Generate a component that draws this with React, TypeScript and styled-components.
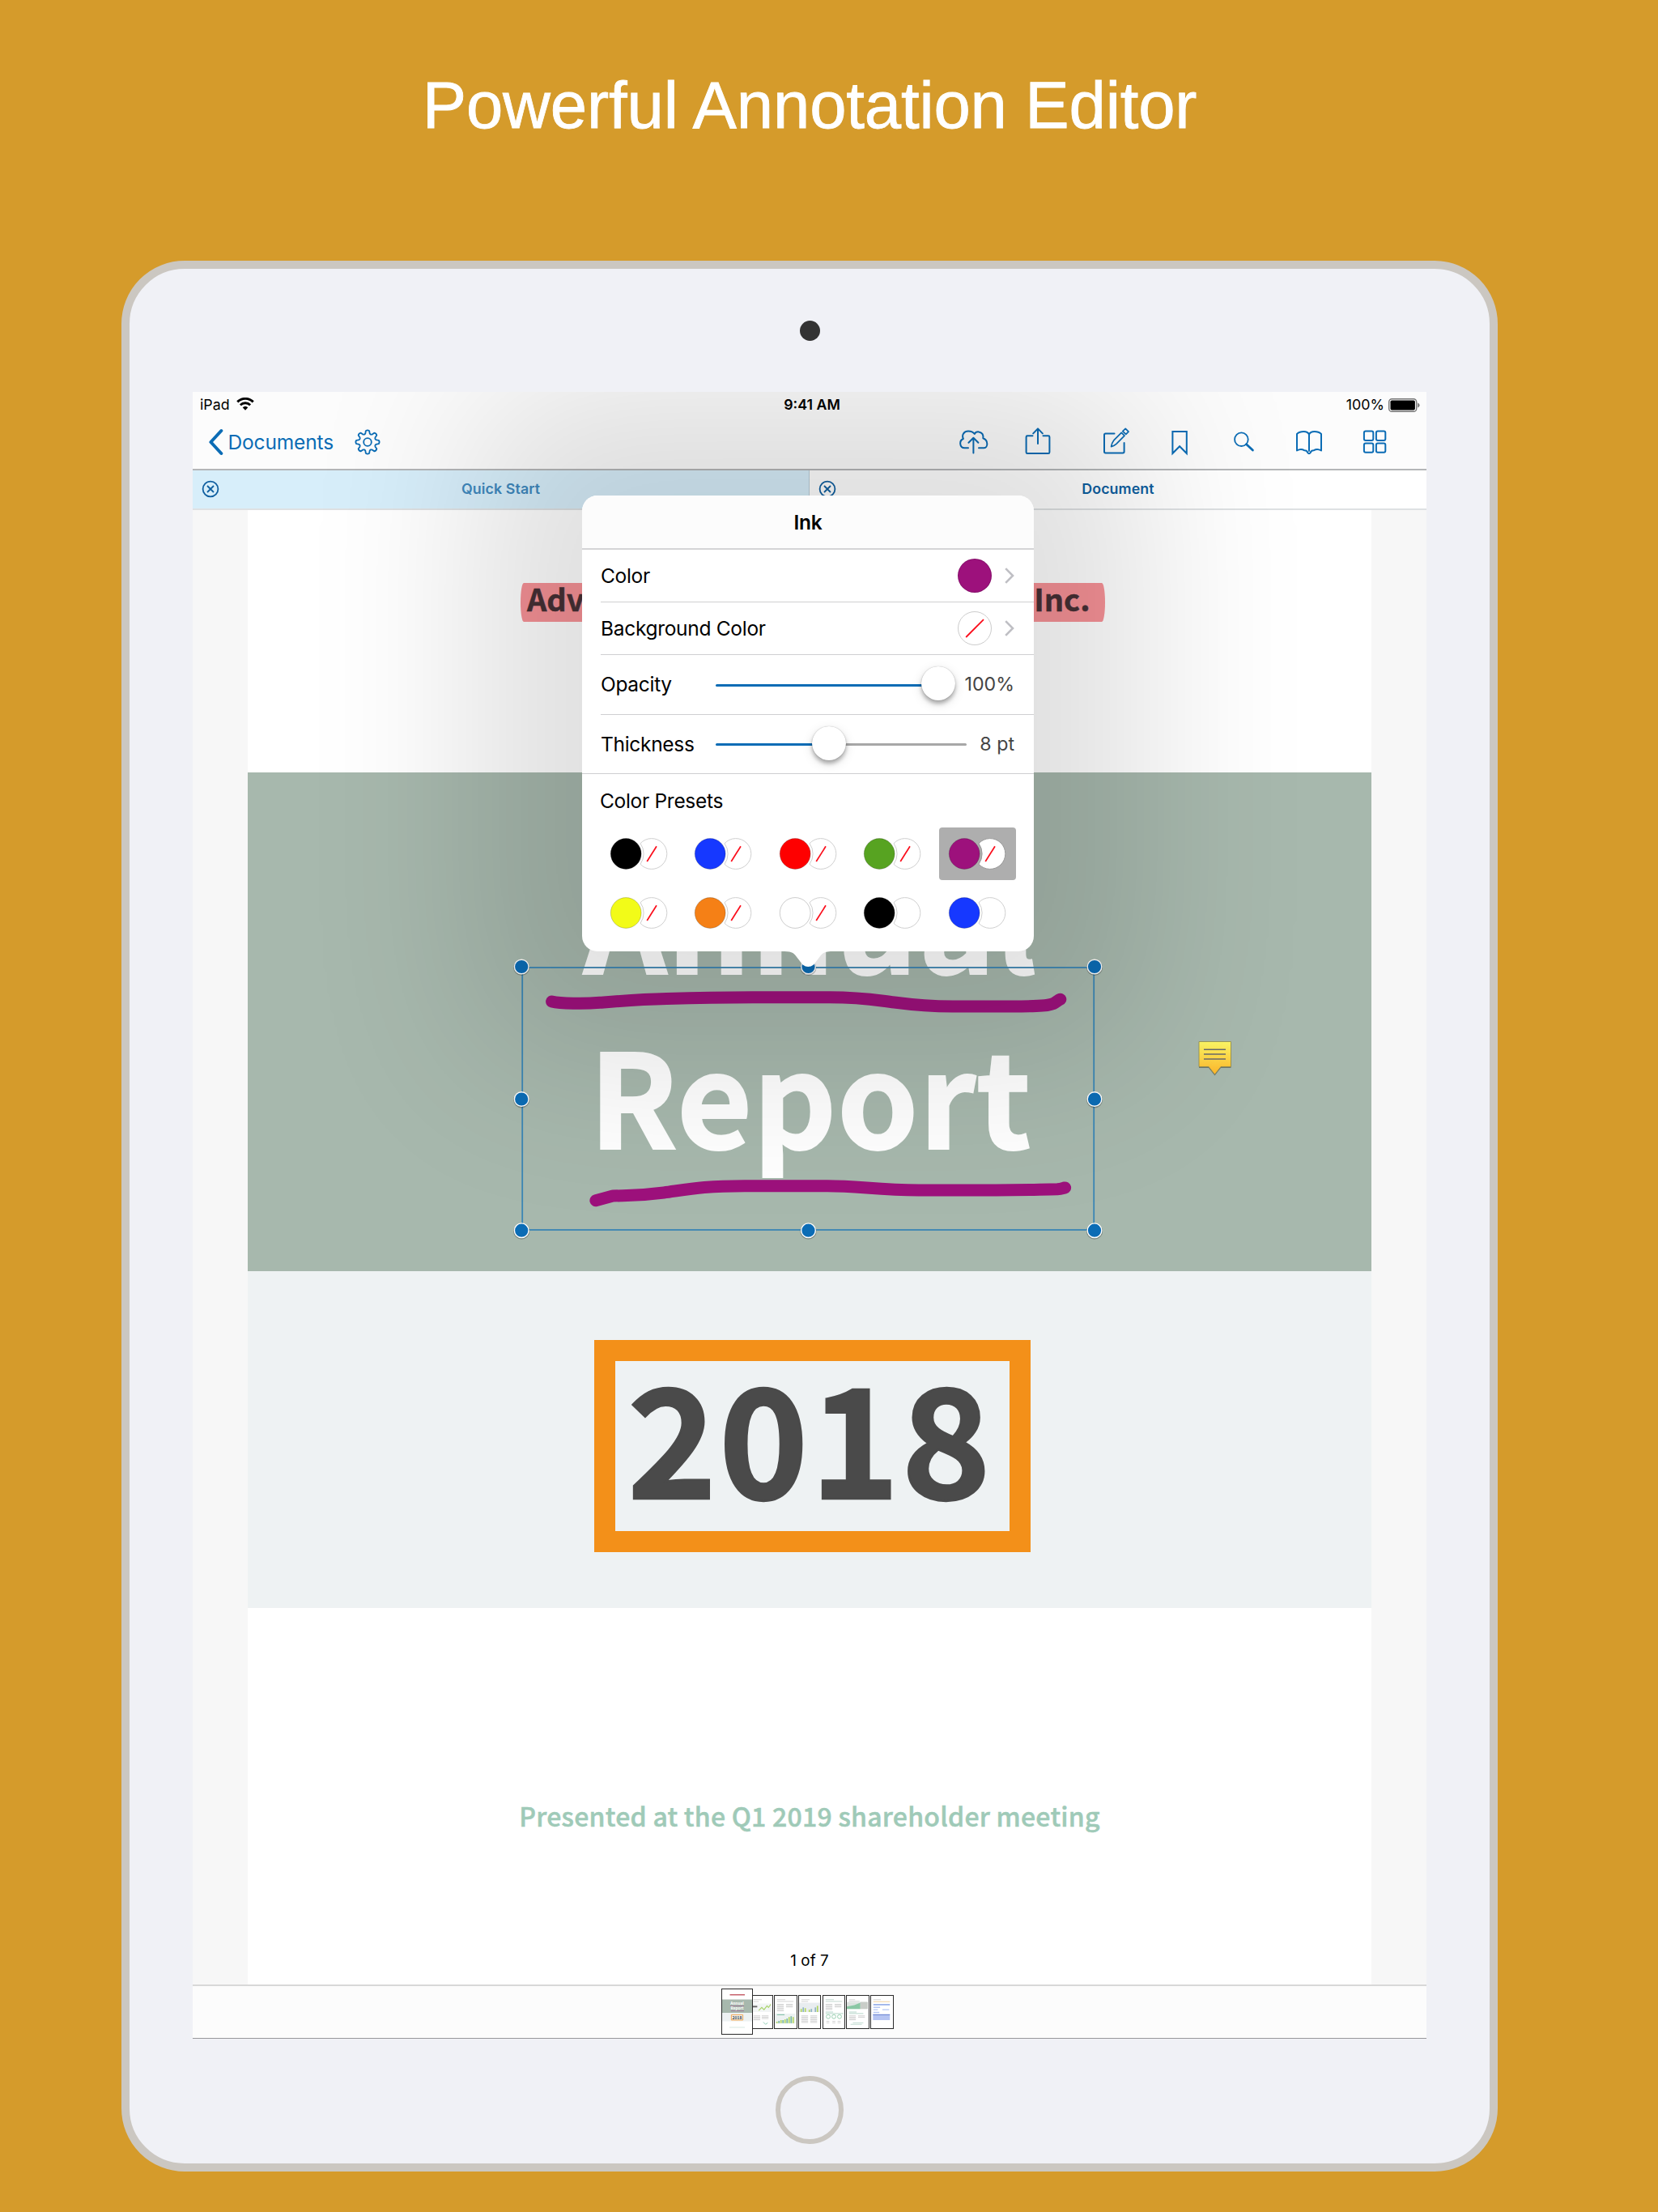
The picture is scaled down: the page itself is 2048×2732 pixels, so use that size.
import React from "react";
import styled, { createGlobalStyle, css } from "styled-components";

const ui = `Inter, "Liberation Sans", sans-serif`;
const doc = `"Noto Sans CJK JP", "Noto Sans", sans-serif`;
const blue = "#0b6cb5";

const GlobalStyle = createGlobalStyle`
  html, body { margin: 0; padding: 0; }
  body { background: #d59b2b; width: 2048px; height: 2732px; overflow: hidden; }
  * { box-sizing: border-box; }
  svg { display: block; flex: none; }
`;

const Poster = styled.main`
  width: 2048px;
  height: 2732px;
  background: #d59b2b;
  padding-left: 150px;
  display: flex;
  flex-direction: column;
  align-items: flex-start;
  font-family: ${ui};
`;

const Headline = styled.h1`
  margin: 0;
  width: 1700px;
  height: 322px;
  padding-top: 80px;
  text-align: center;
  color: #fff;
  font: 400 81.5px/100px "Liberation Sans", Arial, sans-serif;
  letter-spacing: -0.15px;
  -webkit-text-stroke: 0.8px #fff;
`;

const Tablet = styled.section`
  width: 1700px;
  height: 2360px;
  border: 10px solid #cbc7c1;
  border-radius: 78px;
  background: #f0f1f6;
  display: flex;
  flex-direction: column;
  align-items: center;
`;

const Camera = styled.div`
  width: 25px;
  height: 25px;
  margin: 64px 0 63px;
  border-radius: 50%;
  background: #333;
`;

const HomeButton = styled.div`
  width: 84px;
  height: 84px;
  margin-top: 46px;
  border-radius: 50%;
  border: 6px solid #cbc7c1;
`;

const Screen = styled.div`
  position: relative;
  width: 1524px;
  height: 2034px;
  overflow: hidden;
  background: #f7f7f7;
  display: flex;
  flex-direction: column;
`;

const TopBar = styled.header`
  height: 97px;
  background: #fcfcfc;
  border-bottom: 2px solid #b4b6b8;
`;

const StatusRow = styled.div`
  height: 32px;
  padding: 0 8px 0 9px;
  display: grid;
  grid-template-columns: 1fr auto 1fr;
  align-items: center;
  font-size: 17.8px;
  line-height: 32px;
  color: #000;
`;

const StatusSide = styled.div<{ $end?: boolean }>`
  display: flex;
  align-items: center;
  gap: ${(p) => (p.$end ? "5px" : "8px")};
  justify-content: ${(p) => (p.$end ? "flex-end" : "flex-start")};
`;

const Wifi = styled.svg`
  margin-bottom: 3px;
`;

const Clock = styled.span`
  font-weight: 600;
  padding-left: 5px;
`;

const Toolbar = styled.nav`
  height: 60px;
  padding: 0 46px 0 19px;
  display: flex;
  align-items: center;
  color: ${blue};
`;

const BackLink = styled.div`
  display: flex;
  align-items: center;
  gap: 5.5px;
  font-size: 24.5px;
  line-height: 34px;
  letter-spacing: -0.15px;
  width: 179px;
  white-space: nowrap;
`;

const ToolIcon = styled.svg.attrs({ width: 36, height: 36, viewBox: "0 0 36 36" })<{ $before?: number }>`
  margin-left: ${(p) => p.$before ?? 0}px;
  fill: none;
  stroke: currentColor;
  stroke-width: 2;
  stroke-linejoin: round;
  stroke-linecap: round;
`;

const Spacer = styled.div`
  flex: 1;
`;

const TabRow = styled.div`
  height: 49px;
  display: grid;
  grid-template-columns: 1fr 1fr;
  border-bottom: 2px solid rgba(0, 20, 40, 0.13);
  background: #fff;
`;

const Tab = styled.div<{ $active?: boolean }>`
  display: grid;
  grid-template-columns: 42px 1fr 42px;
  align-items: center;
  padding-bottom: 1px;
  text-align: center;
  font-size: 17.8px;
  line-height: 24px;
  letter-spacing: 0.1px;
  font-weight: 600;
  color: ${(p) => (p.$active ? "#0f5fa0" : "#3f88bd")};
  background: ${(p) => (p.$active ? "#fff" : "#d7eefa")};
  border-right: ${(p) => (p.$active ? "0" : "1px solid #b9cdd8")};
`;

const CloseMark = styled.svg.attrs({ width: 22, height: 22, viewBox: "0 0 22 22" })`
  margin: 0 0 1px 10.6px;
  fill: none;
  stroke: #0f5fa0;
  stroke-width: 1.8;
`;

const Viewer = styled.div`
  height: 1821px;
  padding: 0 68px;
`;

const Page = styled.article`
  height: 100%;
  background: #fff;
  font-family: ${doc};
  font-weight: 700;
  display: flex;
  flex-direction: column;
`;

const Masthead = styled.div`
  height: 324px;
  padding: 90px 0 0 337px;
`;

const Highlight = styled.div`
  width: 722px;
  height: 48px;
  padding: 0 18.5px 0 8px;
  display: flex;
  justify-content: space-between;
  font-size: 38px;
  line-height: 38.5px;
  color: #463035;
  -webkit-text-stroke: 0.5px #463035;
  background: #f79297;
  border-radius: 4px / 24px;
`;

const Band = styled.div`
  height: 616px;
  padding-top: 70.5px;
  background: #a7b8ad;
  color: #fff;
  text-align: center;
  font-size: 160.5px;
  line-height: 216.4px;
  letter-spacing: 0.7px;
  -webkit-text-stroke: 2px #fff;
`;

const BandLine = styled.div`
  padding-left: 2px;
`;

const YearBand = styled.div`
  height: 416px;
  padding: 85px 0 0 428px;
  background: #eef2f3;
`;

const YearBox = styled.div`
  width: 539px;
  height: 261.5px;
  border: 26px solid #f39019;
  color: #4a4a4a;
  font-size: 187px;
  line-height: 178px;
  letter-spacing: 2.5px;
  -webkit-text-stroke: 2.4px #4a4a4a;
  text-align: center;
  padding-right: 5.5px;
`;

const Footnote = styled.div`
  padding-top: 232px;
  text-align: center;
  font-size: 32px;
  line-height: 48px;
  letter-spacing: 0.25px;
  font-weight: 500;
  color: #9fcab8;
  -webkit-text-stroke: 0.5px #9fcab8;
`;

const PageCount = styled.div`
  margin-top: 140.5px;
  text-align: center;
  font: 400 18.8px/30px ${ui};
  letter-spacing: 0.1px;
  color: #000;
`;

const ThumbBar = styled.footer`
  height: 67px;
  border-top: 2px solid #d8d8d8;
  border-bottom: 1px solid #98989b;
  background: #fcfcfc;
  display: flex;
  justify-content: center;
  align-items: center;
  gap: 1.4px;
  padding: 0 5px 1px 0;
`;

const Thumb = styled.svg<{ $current?: boolean }>`
  width: ${(p) => (p.$current ? 39 : 28.4)}px;
  height: ${(p) => (p.$current ? 56.5 : 42)}px;
  background: #fff;
  border: 1.3px solid #2b2b2b;
  ${(p) =>
    p.$current &&
    css`
      margin-right: -5.4px;
      z-index: 1;
    `}
`;

/* Canvas layer over the page */
const InkLayer = styled.svg`
  position: absolute;
  left: 392px;
  top: 700px;
`;

const NoteMarker = styled.svg`
  position: absolute;
  left: 1240px;
  top: 799px;
`;

const Popover = styled.aside`
  position: absolute;
  left: 481px;
  top: 128px;
  width: 558px;
  height: 563px;
  border-radius: 19px;
  background: #fff;
  box-shadow: 0 0 210px 135px rgba(0, 0, 0, 0.125);
  color: #000;
  font-size: 24.5px;
  letter-spacing: -0.3px;
`;

const PopTitle = styled.h2`
  margin: 0;
  height: 67px;
  border-bottom: 2px solid #d4d4d6;
  border-radius: 19px 19px 0 0;
  background: #fcfcfc;
  text-align: center;
  font-size: 24.5px;
  font-weight: 600;
  line-height: 67px;
`;

const PopRow = styled.div<{ $h: number; $last?: boolean }>`
  height: ${(p) => p.$h}px;
  margin-left: ${(p) => (p.$last ? 0 : 23)}px;
  padding: 0 24px 0 ${(p) => (p.$last ? 23 : 0)}px;
  border-bottom: 1.5px solid #cfcfd1;
  display: flex;
  align-items: center;
  line-height: 30px;
`;

const Swatch = styled.span<{ $color?: string }>`
  width: 42px;
  height: 42px;
  margin-left: auto;
  margin-right: 16px;
  border-radius: 50%;
  border: 1px solid ${(p) => (p.$color ? "rgba(0,0,0,.15)" : "#ccc")};
  background: ${(p) => p.$color ?? "#fff"};
  display: grid;
  place-items: center;
`;

const SliderLabel = styled.span`
  width: 142px;
`;

const Track = styled.div<{ $w: number; $fill: number }>`
  width: ${(p) => p.$w}px;
  height: 3px;
  margin-top: 2px;
  border-radius: 2px;
  background: linear-gradient(90deg, ${blue} ${(p) => p.$fill}px, #a7a7a7 ${(p) => p.$fill}px);
  display: flex;
  align-items: center;
  padding-left: ${(p) => p.$fill - 21}px;
`;

const Knob = styled.span`
  flex: none;
  width: 42px;
  height: 42px;
  margin-top: -4px;
  border-radius: 50%;
  background: #fff;
  box-shadow: 0 0 1px rgba(0, 0, 0, 0.35), 0 4px 5px rgba(0, 0, 0, 0.28), 0 4px 14px rgba(0, 0, 0, 0.13);
`;

const SliderValue = styled.span`
  flex: 1;
  text-align: right;
  font-size: 23.2px;
  letter-spacing: 0;
  color: #444;
  white-space: nowrap;
`;

const PresetTitle = styled.div`
  padding: 17px 0 0 22px;
  height: 66px;
  line-height: 32px;
`;

const PresetGrid = styled.div`
  padding-left: 22.5px;
  display: grid;
  grid-template-columns: repeat(5, 104.5px);
  grid-auto-rows: 65px;
  row-gap: 8px;
`;

const Preset = styled.div<{ $on?: boolean }>`
  width: 95px;
  height: 65px;
  border-radius: 4px;
  background: ${(p) => (p.$on ? "#aeaeae" : "transparent")};
`;

const PopArrow = styled.svg`
  display: block;
  position: absolute;
  left: 250px;
  top: 562px;
`;

const presets = [
  { color: "#000", clear: true },
  { color: "#1638ff", clear: true },
  { color: "#fe0000", clear: true },
  { color: "#57a321", clear: true },
  { color: "#9d117c", clear: true, on: true },
  { color: "#f2fb18", clear: true },
  { color: "#f58016", clear: true },
  { color: "#fff", clear: true },
  { color: "#000", clear: false },
  { color: "#1638ff", clear: false },
];

function PresetPair({ color, clear, on }: { color: string; clear: boolean; on?: boolean }) {
  return (
    <Preset $on={on}>
      <svg width="95" height="65" viewBox="0 0 95 65">
        <path
          d="M49 19.7 A18.9 18.9 0 1 1 49 45.3 A22 22 0 0 0 49 19.7Z"
          fill="#fff"
          stroke={on ? "#9a9a9a" : "#d0d0d0"}
          strokeWidth="1"
        />
        {clear && <path d="M57.2 42 L69 23.3" stroke="#fb0d1b" strokeWidth="1.7" fill="none" />}
        <circle cx="31.2" cy="32.5" r="18.9" fill={color} stroke="rgba(0,0,0,.2)" strokeWidth="1" />
      </svg>
    </Preset>
  );
}

function Chevron() {
  return (
    <svg width="12" height="20" viewBox="0 0 12 20" fill="none" stroke="#bfbfc4" strokeWidth="2.6">
      <path d="M1.2 1.2 L10 10 L1.2 18.8" />
    </svg>
  );
}

function Close() {
  return (
    <CloseMark>
      <circle cx="11" cy="11" r="9.4" />
      <path d="M7 7 L15 15 M15 7 L7 15" />
    </CloseMark>
  );
}

function gearPath() {
  const pts: string[] = [];
  const teeth = 8;
  for (let i = 0; i < teeth; i++) {
    const at = (deg: number, r: number) => {
      const a = ((i * 45 + deg - 90) * Math.PI) / 180;
      return `${(18 + r * Math.cos(a)).toFixed(2)} ${(18 + r * Math.sin(a)).toFixed(2)}`;
    };
    pts.push(`${i ? "L" : "M"}${at(-9, 14)}`);
    pts.push(`Q${at(0, 15.4)} ${at(9, 14)}`);
    pts.push(`L${at(13, 11.4)}`);
    pts.push(`Q${at(22.5, 9.2)} ${at(32, 11.4)}`);
  }
  return pts.join(" ") + "Z";
}

const handles = [
  [14.2, 10],
  [368.5, 10],
  [722, 10],
  [14.2, 173.5],
  [722, 173.5],
  [14.2, 335.7],
  [368.5, 335.7],
  [722, 335.7],
];

function Selection() {
  return (
    <InkLayer width="740" height="360" viewBox="0 0 740 360">
      <g fill="none" stroke="#9d117c" strokeWidth="15" strokeLinecap="round" strokeLinejoin="round">
        <path d="M51.6 53 C62 55.5 92 56 111 54.3 C140 52 160 50.3 193.6 49.5 C240 48 270 47.7 300 47.7 H395 C435 47.7 450 51 474.7 54 C505 58 520 59 547 59 H620 C655 59 668 58 673 54.5 C676 52.5 677.5 51 679.8 50.3" />
        <path d="M105.9 298.7 L127 293 C150 292.4 158 293.2 190 289 C222 284.6 240 280.7 290 280.7 H392 C430 280.7 455 286 505 286 H600 C640 286 655 285 676 284.8 C681 284.5 682 283.8 685.6 282.9" />
      </g>
      <rect x="15.2" y="11" width="706" height="324" fill="none" stroke="#3b86b4" strokeWidth="1.8" />
      {handles.map(([x, y]) => (
        <g key={`${x}-${y}`}>
          <circle cx={x} cy={y + 1} r="10" fill="rgba(0,0,0,.25)" />
          <circle cx={x} cy={y} r="8.8" fill={blue} stroke="#fff" strokeWidth="1.4" />
        </g>
      ))}
    </InkLayer>
  );
}

function Note() {
  return (
    <NoteMarker width="46" height="50" viewBox="0 0 46 50">
      <defs>
        <linearGradient id="note" x1="0" y1="0" x2="0" y2="1">
          <stop offset="0" stopColor="#fcf765" />
          <stop offset="1" stopColor="#fdb52a" />
        </linearGradient>
      </defs>
      <path d="M3 5 H42.5 V36 H30 L22.5 45.5 L15 36 H3Z" fill="rgba(0,0,0,.35)" />
      <path d="M3 3.5 H42.5 V34.5 H30 L22.5 44 L15 34.5 H3Z" fill="url(#note)" stroke="#8f8a4c" strokeWidth="0.8" />
      <path d="M9 13.3 H36 M9 19 H36 M9 25 H36" stroke="#696a6b" strokeWidth="1.5" />
    </NoteMarker>
  );
}

const grayText = (x: number, y: number, rows = 4) =>
  Array.from({ length: rows }, (_, i) => (
    <path key={`${x}-${y}-${i}`} d={`M${x} ${y + i * 1.7} h9`} stroke="#cfcfcf" strokeWidth="1" />
  ));

function Thumbs() {
  const box = { viewBox: "0 0 28.4 42", preserveAspectRatio: "none" };
  return (
    <ThumbBar>
      <Thumb $current viewBox="0 0 39 56.5" preserveAspectRatio="none">
        <path d="M10 7 H29.5" stroke="#c0515c" strokeWidth="1.4" />
        <path d="M0 13 H39 V30 H0Z" fill="#a7b8ad" />
        <path d="M0 30 H39 V41 H0Z" fill="#eef2f3" />
        <g fontFamily="Noto Sans CJK JP" fontWeight="700" textAnchor="middle">
          <text x="19.5" y="20" fontSize="5" fill="#fff">Annual</text>
          <text x="19.5" y="26" fontSize="5" fill="#fff">Report</text>
          <text x="19.5" y="38" fontSize="5.4" fill="#444">2018</text>
        </g>
        <path d="M10.5 21.3 H28.5 M11.5 27.6 H28.5" stroke="#9d5c8f" strokeWidth="0.7" />
        <path d="M12 32.6 H27 V39.4 H12Z" fill="none" stroke="#f3a54b" strokeWidth="1" />
        <path d="M9.5 48.7 H29.5" stroke="#c9e0d7" strokeWidth="0.8" />
      </Thumb>
      <Thumb {...box}>
        <path d="M4 5 H15 M4 7.5 H11" stroke="#ccc" strokeWidth="0.9" />
        <path d="M0 10 H28 V21 H0Z" fill="#f2f5f5" />
        <path d="M0 14 H9" stroke="#666" strokeWidth="2" />
        <path d="M11 19 L15 15 L18 18 L22 13 L24 15 L27 11" fill="none" stroke="#a8d46a" strokeWidth="1.2" />
        {grayText(4, 26)}
        {grayText(15, 26, 3)}
        <path d="M17 34 l3 3 l3 -2" fill="none" stroke="#8fceb4" strokeWidth="1" />
      </Thumb>
      <Thumb {...box}>
        <path d="M3 5 H14 M3 7.3 H25" stroke="#ccc" strokeWidth="0.9" />
        {grayText(3, 11, 6)}
        {grayText(15, 11, 3)}
        <path d="M0 23 H28 V36 H0Z" fill="#edf2f2" />
        <path d="M3 24.5 H13" stroke="#6eb79b" strokeWidth="1" />
        {[2, 3, 4, 4, 5, 6, 8, 9, 8].map((h, i) => (
          <rect key={i} x={2 + i * 2.7} y={35.5 - h} width="1.8" height={h} fill={i % 2 ? "#79b6a0" : "#b2d65f"} />
        ))}
      </Thumb>
      <Thumb {...box}>
        <path d="M3 5 H14 M3 7.3 H12" stroke="#ccc" strokeWidth="0.9" />
        <path d="M0 9 H28 V21 H0Z" fill="#e9edf0" />
        {[4, 6, 5, 0, 3, 4, 0, 6, 8].map((h, i) => (
          <rect key={i} x={2 + i * 2.7} y={21 - h} width="1.8" height={h} fill={i % 2 ? "#8fb4c4" : "#b2d65f"} />
        ))}
        {grayText(3, 26, 6)}
        {grayText(15, 26, 6)}
      </Thumb>
      <Thumb {...box}>
        <path d="M3 5 H14 M3 7.3 H25" stroke="#b8cfc6" strokeWidth="0.9" />
        {grayText(3, 11, 5)}
        {grayText(15, 11, 3)}
        <path d="M3 21 H13 M3 23 H27" stroke="#a8cfc0" strokeWidth="0.9" />
        <g fill="none" stroke="#93cdac" strokeWidth="1">
          <circle cx="6.5" cy="27" r="2.6" />
          <circle cx="14" cy="27" r="2.6" />
          <circle cx="21.5" cy="27" r="2.6" />
        </g>
        <path d="M4 33 h4 M12 33 h4 M19 33 h4 M4 35 h4 M12 35 h4 M19 35 h4" stroke="#ccc" strokeWidth="0.9" />
      </Thumb>
      <Thumb {...box}>
        <path d="M3 5 H11 M3 7 H17" stroke="#ccc" strokeWidth="0.9" />
        <path d="M0 8 H28 V17 H0Z" fill="#dde3e0" />
        <path d="M0 17 V14 L10 12 L18 9 V17Z" fill="#8ac7a4" />
        <path d="M18 8 H28 V17 H18Z" fill="#c9cdc8" />
        <path d="M3 21 H13 M3 23 H22" stroke="#a8cfc0" strokeWidth="0.9" />
        {grayText(3, 26, 4)}
        {grayText(15, 26, 2)}
        <path d="M8 35 H22 M5 37 H20" stroke="#b5d5c8" strokeWidth="0.9" />
      </Thumb>
      <Thumb {...box}>
        <path d="M3 5 H13" stroke="#ccc" strokeWidth="0.9" />
        <path d="M3 7.6 H25" stroke="#edc98c" strokeWidth="0.9" />
        <path d="M3 11.5 H25" stroke="#6f8fe0" strokeWidth="1.3" />
        <path d="M3 15 H12 M3 18 H9 M15 18 H24 M3 21.5 H11" stroke="#b5c6f3" strokeWidth="1.4" />
        <path d="M2.5 24 H25 V31.5 H2.5Z" fill="#b5c4f2" />
        <path d="M2.5 24.5 H25" stroke="#5673c9" strokeWidth="0.9" />
      </Thumb>
    </ThumbBar>
  );
}

export default function App() {
  return (
    <Poster>
      <GlobalStyle />
      <Headline>Powerful Annotation Editor</Headline>
      <Tablet>
        <Camera />
        <Screen>
          <TopBar>
            <StatusRow>
              <StatusSide>
                <span>iPad</span>
                <Wifi width="22" height="16" viewBox="0 0 22 16" fill="none" stroke="#000">
                  <path d="M1.3 5.4 A13.7 13.7 0 0 1 20.7 5.4" strokeWidth="3" />
                  <path d="M4.9 9.3 A8.6 8.6 0 0 1 17.1 9.3" strokeWidth="2.8" />
                  <path d="M11 15.8 L7.7 12.3 A4.8 4.8 0 0 1 14.3 12.3Z" fill="#000" stroke="none" />
                </Wifi>
              </StatusSide>
              <Clock>9:41 AM</Clock>
              <StatusSide $end>
                <span>100%</span>
                <svg width="39" height="17" viewBox="0 0 39 17">
                  <rect x="0.7" y="0.7" width="34" height="15.6" rx="3.6" fill="none" stroke="#777" strokeWidth="1.4" />
                  <rect x="2.5" y="2.5" width="30.4" height="12" rx="1.8" fill="#000" />
                  <path d="M36.2 5.5 Q38.6 6.6 38.6 8.5 Q38.6 10.4 36.2 11.5Z" fill="#777" />
                </svg>
              </StatusSide>
            </StatusRow>
            <Toolbar>
              <BackLink>
                <svg width="19" height="34" viewBox="0 0 19 34" fill="none" stroke={blue} strokeWidth="4" strokeLinecap="round" strokeLinejoin="round">
                  <path d="M16.3 3 L3.4 17 L16.3 31" />
                </svg>
                <span>Documents</span>
              </BackLink>
              <ToolIcon>
                <path d={gearPath()} strokeWidth="1.8" />
                <circle cx="18" cy="18" r="4.8" strokeWidth="1.8" />
              </ToolIcon>
              <Spacer />
              <ToolIcon>
                <path d="M11 25.3 H6.5 C0 25 -0.5 16 4.9 14 C2.5 9 6 4.6 11 4.6 C14.5 4.6 17 5.5 18.8 8 C20 5.6 22 5.2 24 5.4 C28 5.8 30 9 29.3 13.3 C36.2 16 35.4 25 30.5 25.3 H24" />
                <path d="M17.4 31.5 V13 M11.4 18.7 L17.4 12.7 L23.4 18.7" />
              </ToolIcon>
              <ToolIcon $before={43.5}>
                <path d="M11.5 10.3 H5 Q3.6 10.3 3.6 11.7 V30.5 Q3.6 32 5 32 H31 Q32.4 32 32.4 30.5 V11.7 Q32.4 10.3 31 10.3 H24.5" />
                <path d="M18 20 V1.6 M12.2 7.4 L18 1.4 L23.8 7.4" />
              </ToolIcon>
              <ToolIcon $before={60.5}>
                <path d="M15.5 7.5 H4.6 Q3 7.5 3 9 V29.8 Q3 31.4 4.6 31.4 H26 Q27.6 31.4 27.6 29.8 V19" />
                <path d="M11.6 23.6 C12.4 18.6 13.4 17.6 15 15.6 L24.2 6.4 L28 10.2 L18.6 19.6 C16.6 21.2 15.8 22.6 11.6 23.6Z M25.8 4.6 L29.2 1.4 L33 5.2 L29.8 8.4Z" strokeWidth="1.7" />
              </ToolIcon>
              <ToolIcon $before={42.5}>
                <path d="M9.4 5 H26.8 V32 L18.1 23.2 L9.4 32Z" strokeLinejoin="miter" />
              </ToolIcon>
              <ToolIcon $before={44}>
                <circle cx="14.4" cy="14.7" r="8.3" strokeWidth="1.8" />
                <path d="M20.6 20.8 L28.4 28" strokeWidth="2.8" />
              </ToolIcon>
              <ToolIcon $before={44}>
                <path d="M18 29 V8.5 Q16.4 5 11.4 5 Q6 5 3 8 V28.4 Q8 25.6 12 28.2 Q15.6 28 16.2 31 Q18 33.4 19.8 31 Q20.4 28 24 28.2 Q28 25.6 33 28.4 V8 Q30 5 24.6 5 Q19.6 5 18 8.5" />
              </ToolIcon>
              <ToolIcon $before={45}>
                <rect x="4.9" y="4.5" width="11.4" height="11.4" rx="2" />
                <rect x="19.9" y="4.5" width="11.4" height="11.4" rx="2" />
                <rect x="4.9" y="19.4" width="11.4" height="11.4" rx="2" />
                <rect x="19.9" y="19.4" width="11.4" height="11.4" rx="2" />
              </ToolIcon>
            </Toolbar>
          </TopBar>
          <TabRow>
            <Tab>
              <Close />
              <span>Quick Start</span>
            </Tab>
            <Tab $active>
              <Close />
              <span>Document</span>
            </Tab>
          </TabRow>
          <Viewer>
            <Page>
              <Masthead>
                <Highlight>
                  <span>Adv</span>
                  <span>Inc.</span>
                </Highlight>
              </Masthead>
              <Band>
                <BandLine>Annual</BandLine>
                <BandLine>Report</BandLine>
              </Band>
              <YearBand>
                <YearBox>2018</YearBox>
              </YearBand>
              <Footnote>Presented at the Q1 2019 shareholder meeting</Footnote>
              <PageCount>1 of 7</PageCount>
            </Page>
          </Viewer>
          <Thumbs />
          <Selection />
          <Note />
          <Popover>
            <PopTitle>Ink</PopTitle>
            <PopRow $h={64.5}>
              <span>Color</span>
              <Swatch $color="#9d117c" />
              <Chevron />
            </PopRow>
            <PopRow $h={65.7}>
              <span>Background Color</span>
              <Swatch>
                <svg width="24" height="24" viewBox="0 0 24 24">
                  <path d="M1.2 23 L23 1.2" stroke="#fb0d1b" strokeWidth="1.8" />
                </svg>
              </Swatch>
              <Chevron />
            </PopRow>
            <PopRow $h={73.5}>
              <SliderLabel>Opacity</SliderLabel>
              <Track $w={275} $fill={274.5}>
                <Knob />
              </Track>
              <SliderValue>100%</SliderValue>
            </PopRow>
            <PopRow $h={73.5} $last>
              <SliderLabel>Thickness</SliderLabel>
              <Track $w={310} $fill={139.5}>
                <Knob />
              </Track>
              <SliderValue>8 pt</SliderValue>
            </PopRow>
            <PresetTitle>Color Presets</PresetTitle>
            <PresetGrid>
              {presets.map((p, i) => (
                <PresetPair key={i} {...p} />
              ))}
            </PresetGrid>
            <PopArrow width="60" height="21" viewBox="0 0 60 21">
              <path d="M0 0 V1 C10 1 12.5 4 15.5 8.5 L22.5 17.5 Q29.3 22.5 36 17.5 L43 8.5 C46 4 48.5 1 59 1 V0Z" fill="#fff" />
            </PopArrow>
          </Popover>
        </Screen>
        <HomeButton />
      </Tablet>
    </Poster>
  );
}
